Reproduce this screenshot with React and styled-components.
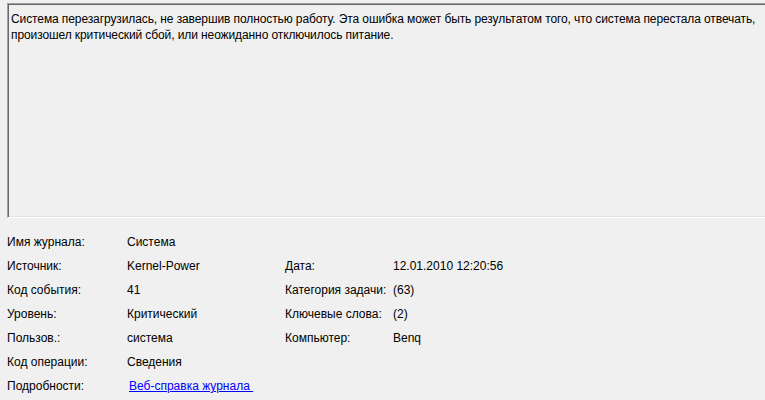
import React from "react";
import styled, { createGlobalStyle } from "styled-components";

const Global = createGlobalStyle`
  html, body { margin: 0; padding: 0; background: #f0f0f0; }
  body { font-family: "Liberation Sans", Arial, sans-serif; font-size: 12px; color: #000; }
`;

const Page = styled.div`
  width: 765px;
  height: 400px;
  overflow: hidden;
  padding-top: 3px;
  box-sizing: border-box;
`;

const MessageBox = styled.div`
  margin-left: 7px;
  width: 800px;
  height: 206px;
  border-top: 1px solid #a0a0a0;
  border-left: 1px solid #a0a0a0;
  border-bottom: 1px solid #ffffff;
  box-shadow: inset 1px 1px 0 #696969, inset 0 -1px 0 #e3e3e3;
  padding: 7px 0 0 3px;
  line-height: 16px;
  box-sizing: content-box;
`;

const Text = styled.p`
  margin: 0;
  width: 785px;
  letter-spacing: -0.1px;
`;

const Details = styled.div`
  display: grid;
  grid-template-columns: 120px 158px 108px 1fr;
  grid-auto-rows: 24px;
  padding: 12px 0 0 7px;
  align-items: center;
`;

const Label = styled.div`
  white-space: nowrap;
`;

const Value = styled.div`
  white-space: nowrap;
  padding-left: ${(p) => (p.$shift ? "2px" : "0")};
`;

const Link = styled.a`
  color: #0000ff;
  text-decoration: underline;
  cursor: pointer;
`;

const rows = [
  ["Имя журнала:", "Система", null, null],
  ["Источник:", "Kernel-Power", "Дата:", "12.01.2010 12:20:56"],
  ["Код события:", "41", "Категория задачи:", "(63)"],
  ["Уровень:", "Критический", "Ключевые слова:", "(2)"],
  ["Пользов.:", "система", "Компьютер:", "Benq"],
  ["Код операции:", "Сведения", null, null],
];

export default function App() {
  return (
    <Page>
      <Global />
      <MessageBox>
        <Text>
          Система перезагрузилась, не завершив полностью работу. Эта ошибка может быть результатом того, что система перестала отвечать,
          <br />
          произошел критический сбой, или неожиданно отключилось питание.
        </Text>
      </MessageBox>
      <Details>
        {rows.map((r, i) => (
          <React.Fragment key={i}>
            <Label>{r[0]}</Label>
            <Value>{r[1]}</Value>
            <Label>{r[2] || ""}</Label>
            <Value>{r[3] || ""}</Value>
          </React.Fragment>
        ))}
        <Label>Подробности:</Label>
        <Value $shift>
          <Link>Веб-справка журнала&nbsp;</Link>
        </Value>
        <Label />
        <Value />
      </Details>
    </Page>
  );
}
